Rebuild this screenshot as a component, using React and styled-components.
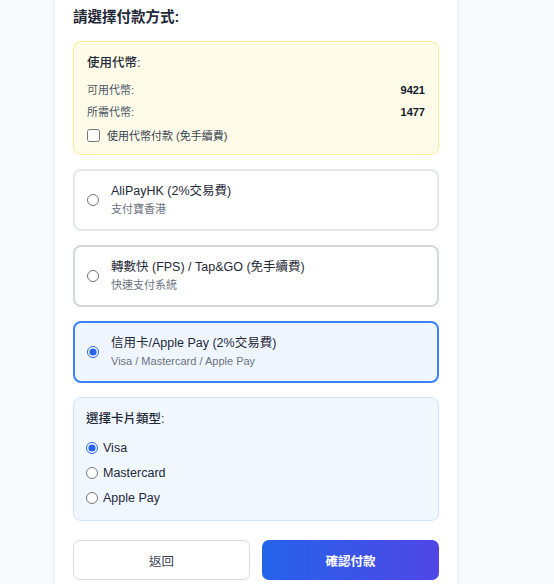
import React, { useState } from "react";
import styled, { createGlobalStyle } from "styled-components";

const Global = createGlobalStyle`
  html, body { margin: 0; padding: 0; background: #f8f9fb; }
  body { font-family: "Liberation Sans", "Noto Sans CJK TC", sans-serif; color: #1f2937; }
  * { box-sizing: border-box; }
`;

const Card = styled.div`
  margin-left: 54px;
  width: 404px;
  min-height: 600px;
  background: #ffffff;
  border-left: 1px solid #eceef1;
  border-right: 1px solid #eceef1;
  box-shadow: 0 1px 4px rgba(0, 0, 0, 0.04);
  padding: 7px 18px 20px;
`;

const Title = styled.h2`
  margin: 0 0 14px;
  font-size: 14.5px;
  line-height: 20px;
  font-weight: 700;
  color: #1f2937;
`;

const TokenBox = styled.div`
  background: #fefce8;
  border: 1px solid #fdeb8f;
  border-radius: 8px;
  padding: 12px 13px 11px;
  margin-bottom: 14px;
`;

const BoxHeading = styled.div`
  font-size: 12.5px;
  line-height: 18px;
  font-weight: 500;
  color: #1f2937;
  margin-bottom: ${(p) => p.$mb || 10}px;
`;

const InfoRow = styled.div`
  display: flex;
  justify-content: space-between;
  font-size: 11px;
  line-height: 16px;
  color: #4b5563;
  & + & { margin-top: 6px; }
`;

const Num = styled.span`
  font-weight: 700;
  color: #111827;
`;

const CheckRow = styled.label`
  display: flex;
  align-items: center;
  gap: 7px;
  margin-top: 7px;
  height: 16px;
  font-size: 11px;
  color: #374151;
`;

const Check = styled.input`
  margin: 0;
  width: 13px;
  height: 13px;
  accent-color: #2563eb;
`;

const Option = styled.label`
  display: flex;
  align-items: center;
  gap: 12px;
  height: 62px;
  padding: 0 12px;
  border: 2px solid ${(p) => (p.$selected ? "#3b82f6" : p.$hover ? "#d4d8de" : "#e5e7eb")};
  background: ${(p) => (p.$selected ? "#eff6ff" : "#ffffff")};
  border-radius: 8px;
  margin-bottom: 14px;
  cursor: pointer;
`;

const Radio = styled.input`
  margin: 0;
  width: 12px;
  height: 12px;
  flex: none;
  accent-color: #2563eb;
`;

const OptText = styled.div`
  display: flex;
  flex-direction: column;
  gap: 2px;
`;

const OptTitle = styled.div`
  font-size: 12.5px;
  line-height: 17px;
  color: #1f2937;
`;

const OptSub = styled.div`
  font-size: 11px;
  line-height: 15px;
  color: #6b7280;
`;

const TypeBox = styled.div`
  background: #f0f7ff;
  border: 1px solid #cfe3fd;
  border-radius: 8px;
  padding: 12px 12px 10px;
  margin-bottom: 19px;
`;

const TypeRow = styled.label`
  display: flex;
  align-items: center;
  gap: 5px;
  height: 25px;
  font-size: 12.5px;
  color: #1f2937;
  cursor: pointer;
`;

const Buttons = styled.div`
  display: grid;
  grid-template-columns: 1fr 1fr;
  gap: 12px;
`;

const Button = styled.button`
  height: 40px;
  border-radius: 7px;
  font-family: inherit;
  font-size: 12.5px;
  cursor: pointer;
  border: ${(p) => (p.$primary ? "none" : "1px solid #d9dce1")};
  background: ${(p) => (p.$primary ? "linear-gradient(90deg, #2563eb, #4f46e5)" : "#ffffff")};
  color: ${(p) => (p.$primary ? "#ffffff" : "#374151")};
  font-weight: ${(p) => (p.$primary ? 700 : 400)};
`;

const methods = [
  { id: "alipay", title: "AliPayHK (2%交易費)", sub: "支付寶香港" },
  { id: "fps", title: "轉數快 (FPS) / Tap&GO (免手續費)", sub: "快速支付系統", hover: true },
  { id: "card", title: "信用卡/Apple Pay (2%交易費)", sub: "Visa / Mastercard / Apple Pay" },
];

const cardTypes = ["Visa", "Mastercard", "Apple Pay"];

export default function App() {
  const [method, setMethod] = useState("card");
  const [cardType, setCardType] = useState("Visa");
  const [useTokens, setUseTokens] = useState(false);

  return (
    <>
      <Global />
      <Card>
        <Title>請選擇付款方式:</Title>
        <TokenBox>
          <BoxHeading>使用代幣:</BoxHeading>
          <InfoRow>
            <span>可用代幣:</span>
            <Num>9421</Num>
          </InfoRow>
          <InfoRow>
            <span>所需代幣:</span>
            <Num>1477</Num>
          </InfoRow>
          <CheckRow>
            <Check type="checkbox" checked={useTokens} onChange={(e) => setUseTokens(e.target.checked)} />
            使用代幣付款 (免手續費)
          </CheckRow>
        </TokenBox>

        {methods.map((m) => (
          <Option key={m.id} $selected={method === m.id} $hover={m.hover}>
            <Radio type="radio" name="method" checked={method === m.id} onChange={() => setMethod(m.id)} />
            <OptText>
              <OptTitle>{m.title}</OptTitle>
              <OptSub>{m.sub}</OptSub>
            </OptText>
          </Option>
        ))}

        <TypeBox>
          <BoxHeading $mb={7}>選擇卡片類型:</BoxHeading>
          {cardTypes.map((t) => (
            <TypeRow key={t}>
              <Radio type="radio" name="cardtype" checked={cardType === t} onChange={() => setCardType(t)} />
              {t}
            </TypeRow>
          ))}
        </TypeBox>

        <Buttons>
          <Button>返回</Button>
          <Button $primary>確認付款</Button>
        </Buttons>
      </Card>
    </>
  );
}
